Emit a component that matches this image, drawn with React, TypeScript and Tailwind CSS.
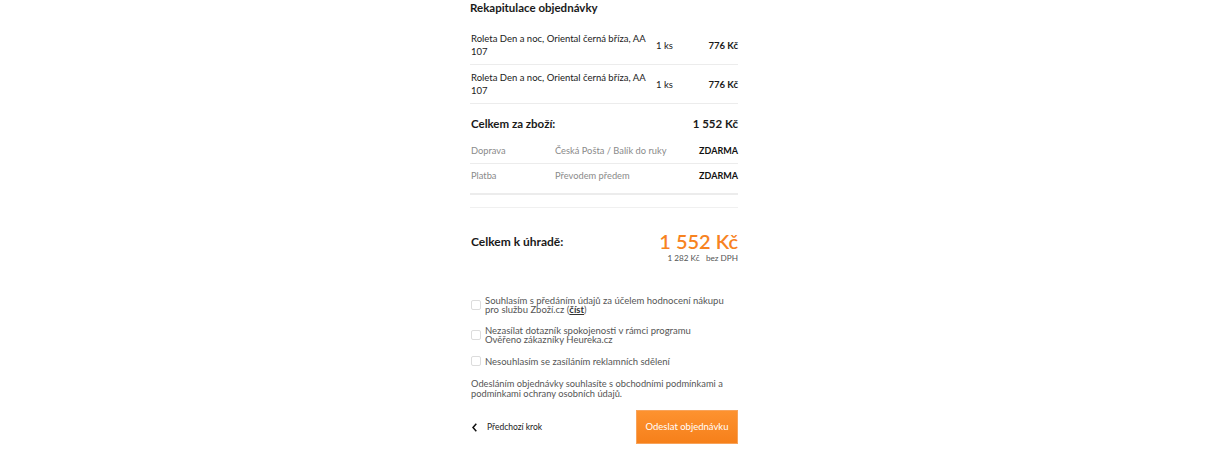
import React from "react";

const items = [
  { name: "Roleta Den a noc, Oriental černá bříza, AA 107", qty: "1 ks", price: "776 Kč" },
  { name: "Roleta Den a noc, Oriental černá bříza, AA 107", qty: "1 ks", price: "776 Kč" },
];

const fees = [
  { label: "Doprava", method: "Česká Pošta / Balík do ruky", price: "ZDARMA" },
  { label: "Platba", method: "Převodem předem", price: "ZDARMA" },
];

const consents = [
  ["Souhlasím s předáním údajů za účelem hodnocení nákupu", "pro službu Zboží.cz"],
  ["Nezasílat dotazník spokojenosti v rámci programu", "Ověřeno zákazníky Heureka.cz"],
  ["Nesouhlasím se zasíláním reklamních sdělení"],
];

function Checkbox() {
  return <span className="h-[10px] w-[10px] shrink-0 rounded-[2px] border border-[#dcdcdc] bg-white" />;
}

export default function App() {
  return (
    <div className="flex min-h-[450px] justify-center bg-white font-['Lato','Liberation_Sans',sans-serif] text-[#1a1a1a]">
      <div className="w-[270px] pr-[2px]">
        <h2 className="text-[11.5px] font-bold leading-[16px]">Rekapitulace objednávky</h2>

        <div className="mt-[10px]">
          {items.map((it, i) => (
            <div
              key={i}
              className="flex items-center border-b border-[#ececec] py-[6px] text-[9.5px] leading-[13px]"
            >
              <span className="w-[186px] pl-px">{it.name}</span>
              <span className="w-[40px]">{it.qty}</span>
              <span className="flex-1 text-right font-bold">{it.price}</span>
            </div>
          ))}
        </div>

        <div className="mt-[12px] flex items-center justify-between pl-px text-[11.5px] font-bold leading-[16px]">
          <span>Celkem za zboží:</span>
          <span>1 552 Kč</span>
        </div>

        <div className="mt-[7px] border-b-2 border-[#ececec] pb-[5px]">
          {fees.map((f, i) => (
            <div
              key={f.label}
              className={
                "flex items-center py-[5px] text-[9.3px] leading-[14px] " +
                (i === 0 ? "border-b border-[#ececec]" : "")
              }
            >
              <span className="w-[85px] pl-px text-[#8a8a8a]">{f.label}</span>
              <span className="flex-1 text-[#8a8a8a]">{f.method}</span>
              <span className="text-[9px] font-bold text-[#111]">{f.price}</span>
            </div>
          ))}
        </div>

        <div className="mt-[12px] border-t border-[#f0f0f0]" />

        <div className="mt-[21px] flex items-start justify-between">
          <span className="mt-[5px] pl-px text-[12px] font-bold leading-[16px]">Celkem k úhradě:</span>
          <div className="text-right">
            <div className="text-[20px] font-semibold leading-[24px] text-[#f7831f]">1 552 Kč</div>
            <div className="text-[8.2px] leading-[10px] text-[#555]">1 282 Kč&nbsp;&nbsp; bez DPH</div>
          </div>
        </div>

        <div className="mt-[33px] flex flex-col gap-[12px] text-[9.5px] leading-[9px] text-[#555]">
          {consents.map((c, i) => (
            <label key={i} className="flex items-center gap-[4px] pl-px">
              <Checkbox />
              <span className="whitespace-nowrap">
                {c[0]}
                {c[1] && (
                  <>
                    <br />
                    {c[1]}
                    {i === 0 && (
                      <>
                        {" "}(<span className="font-bold text-[#333] underline">číst</span>)
                      </>
                    )}
                  </>
                )}
              </span>
            </label>
          ))}
        </div>

        <p className="mt-[13px] whitespace-nowrap pl-px text-[9.3px] leading-[10px] text-[#555]">
          Odesláním objednávky souhlasíte s obchodními podmínkami a
          <br />
          podmínkami ochrany osobních údajů.
        </p>

        <div className="mt-[11px] flex items-center justify-between">
          <button className="flex items-center gap-[10px] pl-[2px] text-[8.5px] text-[#222]">
            <svg width="5" height="9" viewBox="0 0 5 9" fill="none">
              <path d="M4.3 0.8L1 4.5L4.3 8.2" stroke="#111" strokeWidth="1.5" />
            </svg>
            Předchozí krok
          </button>
          <button className="h-[34px] w-[102px] border border-[#f8a35a] bg-gradient-to-b from-[#fd922f] to-[#f6801a] text-[9.5px] text-white">
            Odeslat objednávku
          </button>
        </div>
      </div>
    </div>
  );
}
